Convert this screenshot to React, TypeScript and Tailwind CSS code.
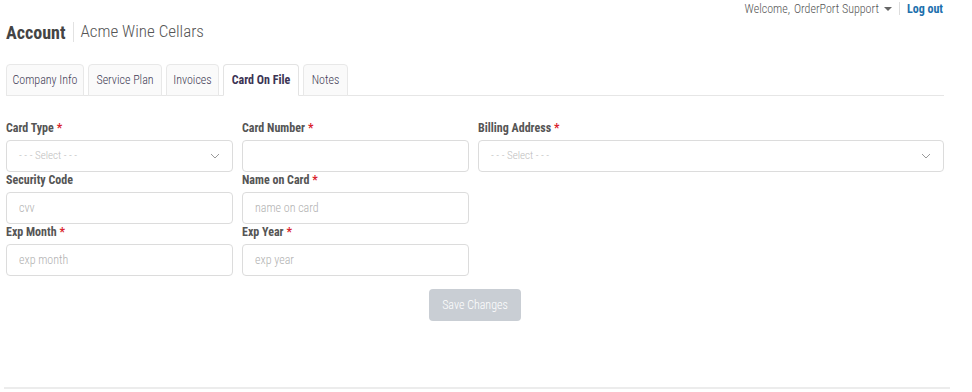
import { useState } from "react";

const font =
  "font-['Roboto_Condensed','Liberation_Sans_Narrow',Roboto,sans-serif] [font-stretch:condensed]";

const tabs = [
  { name: "Company Info", w: "w-[78px]" },
  { name: "Service Plan", w: "w-[74px]" },
  { name: "Invoices", w: "w-[53px]" },
  { name: "Card On File", w: "w-[76px]" },
  { name: "Notes", w: "w-[45px]" },
];

function Chevron() {
  return (
    <svg width="10" height="6" viewBox="0 0 10 6" className="text-[#9a9a9a]">
      <path d="M1 1l4 4 4-4" fill="none" stroke="currentColor" strokeWidth="1" />
    </svg>
  );
}

function FieldLabel({ text, required }: { text: string; required?: boolean }) {
  return (
    <div className="h-4 mb-1 text-[12px] leading-4 font-bold text-[#555]">
      {text}
      {required && <span className="text-[#d9242d] ml-[3px]">*</span>}
    </div>
  );
}

function TextField({
  label,
  placeholder,
  required,
}: {
  label: string;
  placeholder?: string;
  required?: boolean;
}) {
  return (
    <div className="flex flex-col">
      <FieldLabel text={label} required={required} />
      <input
        type="text"
        placeholder={placeholder}
        className="h-8 w-full border border-[#dcdcdc] rounded-[4px] px-3 text-[12px] font-light text-[#444] placeholder:text-[#b0b0b0] outline-none bg-white"
      />
    </div>
  );
}

function SelectField({ label, required }: { label: string; required?: boolean }) {
  return (
    <div className="flex flex-col">
      <FieldLabel text={label} required={required} />
      <div className="h-8 w-full border border-[#dcdcdc] rounded-[4px] pl-3 pr-3 flex items-center justify-between bg-white">
        <span className="text-[11px] font-light text-[#bdbdbd]">- - - Select - - -</span>
        <Chevron />
      </div>
    </div>
  );
}

export default function App() {
  const [active, setActive] = useState("Card On File");

  return (
    <div className={`${font} w-[972px] h-[392px] bg-white relative overflow-hidden`}>
      <div className="h-[17px] flex items-center justify-end pr-[29px] text-[12px]">
        <span className="text-[#555] font-light">Welcome,</span>
        <span className="text-[#555] font-light ml-[4px]">OrderPort Support</span>
        <span className="ml-[5px] w-0 h-0 border-l-[4px] border-r-[4px] border-t-[4px] border-l-transparent border-r-transparent border-t-[#666]" />
        <span className="mx-[7px] w-px h-[13px] bg-[#ddd]" />
        <a className="font-bold text-[#1d70ad]">Log out</a>
      </div>

      <div className="px-[6px]">
        <div className="mt-[5px] h-[20px] flex items-center">
          <span className="text-[18px] font-bold text-[#444]">Account</span>
          <span className="mx-[7px] w-px h-[20px] bg-[#e2e2e2]" />
          <span className="text-[17px] font-light text-[#555]">Acme Wine Cellars</span>
        </div>

        <div className="mt-[22px] w-[938px] flex items-end gap-[4px] border-b border-[#e6e6e6] h-[32px]">
          {tabs.map((t) => {
            const on = t.name === active;
            return (
              <button
                key={t.name}
                onClick={() => setActive(t.name)}
                className={`${t.w} h-[32px] -mb-px rounded-t-[4px] border text-[12px] flex items-center justify-center ${
                  on
                    ? "bg-white border-[#e3e3e3] border-b-white font-bold text-[#3b3454]"
                    : "bg-[#fafafa] border-[#e8e8e8] font-light text-[#3f3a55]"
                }`}
              >
                {t.name}
              </button>
            );
          })}
        </div>

        <div className="mt-[24px] w-[938px] grid grid-cols-[227px_227px_466px] gap-x-[9px]">
          <SelectField label="Card Type" required />
          <TextField label="Card Number" required />
          <SelectField label="Billing Address" required />
          <TextField label="Security Code" placeholder="cvv" />
          <TextField label="Name on Card" placeholder="name on card" required />
          <div />
          <TextField label="Exp Month" placeholder="exp month" required />
          <TextField label="Exp Year" placeholder="exp year" required />
          <div />
        </div>

        <div className="w-[938px] flex justify-center mt-[13px]">
          <button className="w-[92px] h-[32px] rounded-[4px] bg-[#c9ced4] text-white font-light text-[12px]">
            Save Changes
          </button>
        </div>

        <div className="mt-[66px] -ml-[2px] w-[946px] h-[2px] bg-[#ececec]" />
      </div>
    </div>
  );
}
